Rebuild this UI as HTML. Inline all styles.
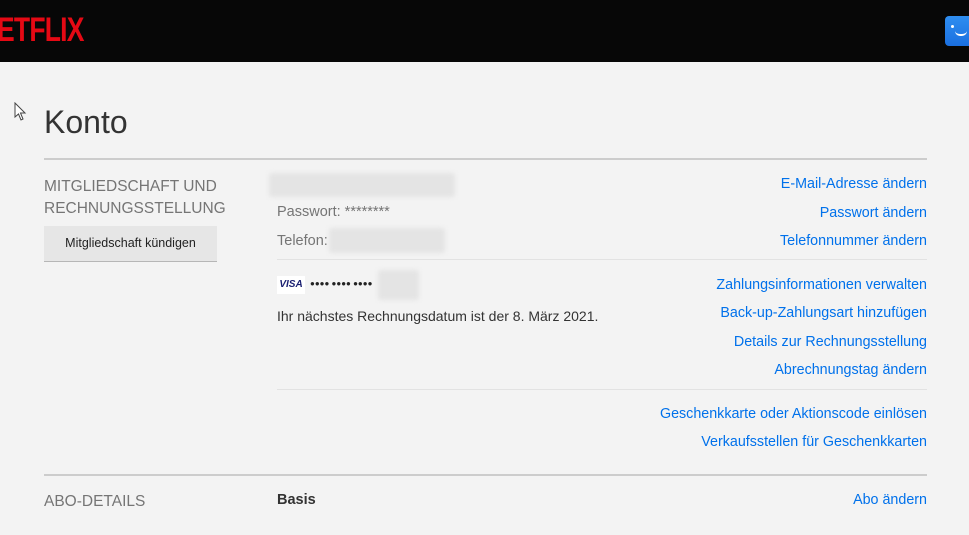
<!DOCTYPE html>
<html><head><meta charset="utf-8"><style>
*{margin:0;padding:0;box-sizing:border-box}
body{width:969px;height:535px;overflow:hidden;background:#f3f3f3;font-family:"Liberation Sans",sans-serif;position:relative}
.hdr{position:absolute;left:0;top:0;width:969px;height:62px;background:#070707}
.logo{position:absolute;left:-3px;top:11px;color:#e50914;font-weight:bold;font-size:34px;letter-spacing:-1px;transform:scaleX(.78);transform-origin:left}
.av{position:absolute;left:945px;top:16px;width:30px;height:30px;border-radius:4px;background:linear-gradient(#2f8ef0,#1a6fe0)}
.a{position:absolute;white-space:nowrap}
.t{color:#333;font-size:16px}
.g{color:#757575;font-size:16px}
.l{color:#0071eb;font-size:14.3px;right:42px}
.hr{position:absolute;left:44px;width:883px;height:2px;background:#ccc}
.hr2{position:absolute;left:277px;width:650px;height:1px;background:#e2e2e2}
.blur{position:absolute;background:#e4e4e4;border-radius:3px;filter:blur(2px)}
</style></head><body>
<div class="hdr"><div class="logo">ETFLIX</div><div class="av"><div style="position:absolute;left:6px;top:9px;width:3px;height:3px;background:#fff;border-radius:50%"></div><div style="position:absolute;left:10px;top:15px;width:12px;height:5px;border-bottom:2px solid #fff;border-radius:0 0 8px 8px"></div></div></div>
<svg class="a" style="left:14px;top:102px" width="14" height="20"><path d="M1 1 L1 15 L4.5 12 L7 18 L9 17 L6.5 11 L11 11 Z" fill="#fff" stroke="#444" stroke-width="1"/></svg>
<div class="a" style="left:44px;top:104px;font-size:32px;color:#333">Konto</div>
<div class="hr" style="top:158px"></div>
<div class="a g" style="left:44px;top:176px;line-height:22px;font-size:15.5px">MITGLIEDSCHAFT UND<br>RECHNUNGSSTELLUNG</div>
<div class="a" style="left:44px;top:226px;width:173px;height:35px;background:#e6e6e6;box-shadow:0 1px 0 rgba(0,0,0,.25);font-size:12.5px;color:#222;text-align:center;line-height:35px">Mitgliedschaft kündigen</div>
<div class="blur" style="left:269px;top:173px;width:186px;height:24px"></div>
<div class="a g" style="left:277px;top:204px;font-size:14.5px">Passwort: ********</div>
<div class="a g" style="left:277px;top:233px;font-size:14.5px">Telefon:</div>
<div class="blur" style="left:329px;top:228px;width:116px;height:25px"></div>
<div class="hr2" style="top:259px"></div>
<div class="a" style="left:277px;top:276px;width:28px;height:18px;background:#fff;color:#1a1f71;font-size:10px;font-weight:bold;font-style:italic;text-align:center;line-height:18px">VISA</div>
<div class="a" style="left:310px;top:279px;font-size:8px;color:#222;letter-spacing:0px">●●●● ●●●● ●●●●</div>
<div class="blur" style="left:378px;top:270px;width:41px;height:30px"></div>
<div class="a t" style="left:277px;top:308px;font-size:14px">Ihr nächstes Rechnungsdatum ist der 8. März 2021.</div>
<div class="hr2" style="top:389px"></div>
<div class="a l" style="top:176px">E-Mail-Adresse ändern</div>
<div class="a l" style="top:205px">Passwort ändern</div>
<div class="a l" style="top:233px">Telefonnummer ändern</div>
<div class="a l" style="top:277px">Zahlungsinformationen verwalten</div>
<div class="a l" style="top:305px">Back-up-Zahlungsart hinzufügen</div>
<div class="a l" style="top:334px">Details zur Rechnungsstellung</div>
<div class="a l" style="top:362px">Abrechnungstag ändern</div>
<div class="a l" style="top:406px">Geschenkkarte oder Aktionscode einlösen</div>
<div class="a l" style="top:434px">Verkaufsstellen für Geschenkkarten</div>
<div class="hr" style="top:474px"></div>
<div class="a g" style="left:44px;top:493px;font-size:15.5px">ABO-DETAILS</div>
<div class="a t" style="left:277px;top:492px;font-weight:bold;font-size:14.5px">Basis</div>
<div class="a l" style="top:492px">Abo ändern</div>
</body></html>
